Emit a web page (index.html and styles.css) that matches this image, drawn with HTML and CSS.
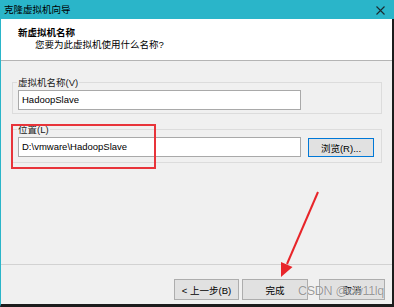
FILE: index.html
```html
<!DOCTYPE html>
<html lang="zh-CN">
<head>
    <meta charset="UTF-8">
    <title>克隆虚拟机向导</title>
    <link rel="stylesheet" href="styles.css">
</head>
<body>
    <div class="window">
        <div class="titlebar">
            <span class="title">克隆虚拟机向导</span>
            <svg class="close" width="9" height="9" viewBox="0 0 9 9">
                <path d="M0.5 0.5 L8.5 8.5 M8.5 0.5 L0.5 8.5" stroke="#1b2b30" stroke-width="1.1" fill="none"/>
            </svg>
        </div>

        <div class="frame">
            <div class="header">
                <div class="h-title">新虚拟机名称</div>
                <div class="h-sub">您要为此虚拟机使用什么名称?</div>
            </div>

            <div class="content">
                <fieldset class="group">
                    <legend>虚拟机名称(V)</legend>
                    <div class="field">HadoopSlave</div>
                </fieldset>

                <fieldset class="group group-loc">
                    <legend>位置(L)</legend>
                    <div class="row">
                        <div class="field">D:\vmware\HadoopSlave</div>
                        <button class="btn btn-default">浏览(R)...</button>
                    </div>
                </fieldset>
            </div>

            <div class="footer">
                <button class="btn btn-back">&lt; 上一步(B)</button>
                <button class="btn">完成</button>
                <button class="btn btn-cancel">取消</button>
            </div>
        </div>

        <!-- annotations drawn on top of the screenshot -->
        <svg class="annot" width="394" height="307" viewBox="0 0 394 307">
            <rect x="12" y="125" width="143" height="43" fill="none" stroke="#e8343a" stroke-width="2"/>
            <line x1="318" y1="192" x2="287" y2="264" stroke="#e8252a" stroke-width="2"/>
            <polygon points="281,277 281,262 292.5,267" fill="#e8252a"/>
        </svg>
        <div class="watermark">CSDN @cw11lq</div>
    </div>
</body>
</html>
```

FILE: styles.css
```css
:root {
    --title-color: #2ab5c9;
    --face: #f0f0f0;
}

body {
    margin: 0;
    font-family: "Liberation Sans", "Noto Sans CJK SC", sans-serif;
    font-size: 9.5px;
    color: #000;
    background: #fff;
}

.window {
    position: relative;
    width: 394px;
    height: 307px;
    display: flex;
    flex-direction: column;
    overflow: hidden;
}

.titlebar {
    height: 19px;
    flex: none;
    background: var(--title-color);
    display: flex;
    align-items: center;
    justify-content: space-between;
    padding: 0 9px 0 4px;
}

.title {
    line-height: 19px;
}

.close {
    display: block;
    margin-top: 1px;
}

.frame {
    flex: 1;
    display: flex;
    flex-direction: column;
    border-left: 1px solid var(--title-color);
    border-right: 2px solid #1c1c1c;
    border-bottom: 3px solid #1c1c1c;
    background: var(--face);
}

.header {
    height: 42px;
    background: #fff;
    border-bottom: 1px solid #b4b4b4;
    padding: 8px 0 0 17px;
    box-sizing: border-box;
    flex: none;
}

.h-title {
    font-weight: bold;
    line-height: 12px;
}

.h-sub {
    line-height: 12px;
    margin: 0 0 0 17px;
}

.content {
    flex: 1;
    padding: 14px 10px 0 11px;
}

.group {
    margin: 0;
    padding: 0 5px 3px 5px;
    border: 1px solid #dcdcdc;
}

.group legend {
    padding: 0 1px;
    margin-left: -1px;
    line-height: 15px;
    color: #1a1a1a;
}

.group-loc {
    margin-top: 8px;
    padding-bottom: 5px;
}

.row {
    display: flex;
    gap: 7px;
    align-items: center;
}

.field {
    width: 283px;
    height: 20px;
    box-sizing: border-box;
    background: #fff;
    border: 1px solid #a9a9a9;
    padding: 0 3px;
    line-height: 18px;
}

.btn {
    font: inherit;
    color: #000;
    background: #e1e1e1;
    border: 1px solid #adadad;
    width: 66px;
    height: 21px;
    padding: 0;
    margin: 0;
}

.btn-default {
    height: 19px;
    margin-top: 1px;
    border-color: #0078d7;
}

.footer {
    height: 40px;
    flex: none;
    border-top: 1px solid #d2d2d2;
    display: flex;
    justify-content: flex-end;
    gap: 3px;
    padding: 14px 7px 0 0;
    box-sizing: border-box;
}

.btn-back {
    width: 65px;
}

.btn-cancel {
    margin-left: 8px;
}

.annot {
    position: absolute;
    left: 0;
    top: 0;
    pointer-events: none;
}

.watermark {
    position: absolute;
    left: 298px;
    top: 284px;
    font-size: 12.5px;
    letter-spacing: -0.3px;
    color: rgba(120, 120, 120, 0.75);
    text-shadow: 0 0 1px #fff;
    pointer-events: none;
}
```
